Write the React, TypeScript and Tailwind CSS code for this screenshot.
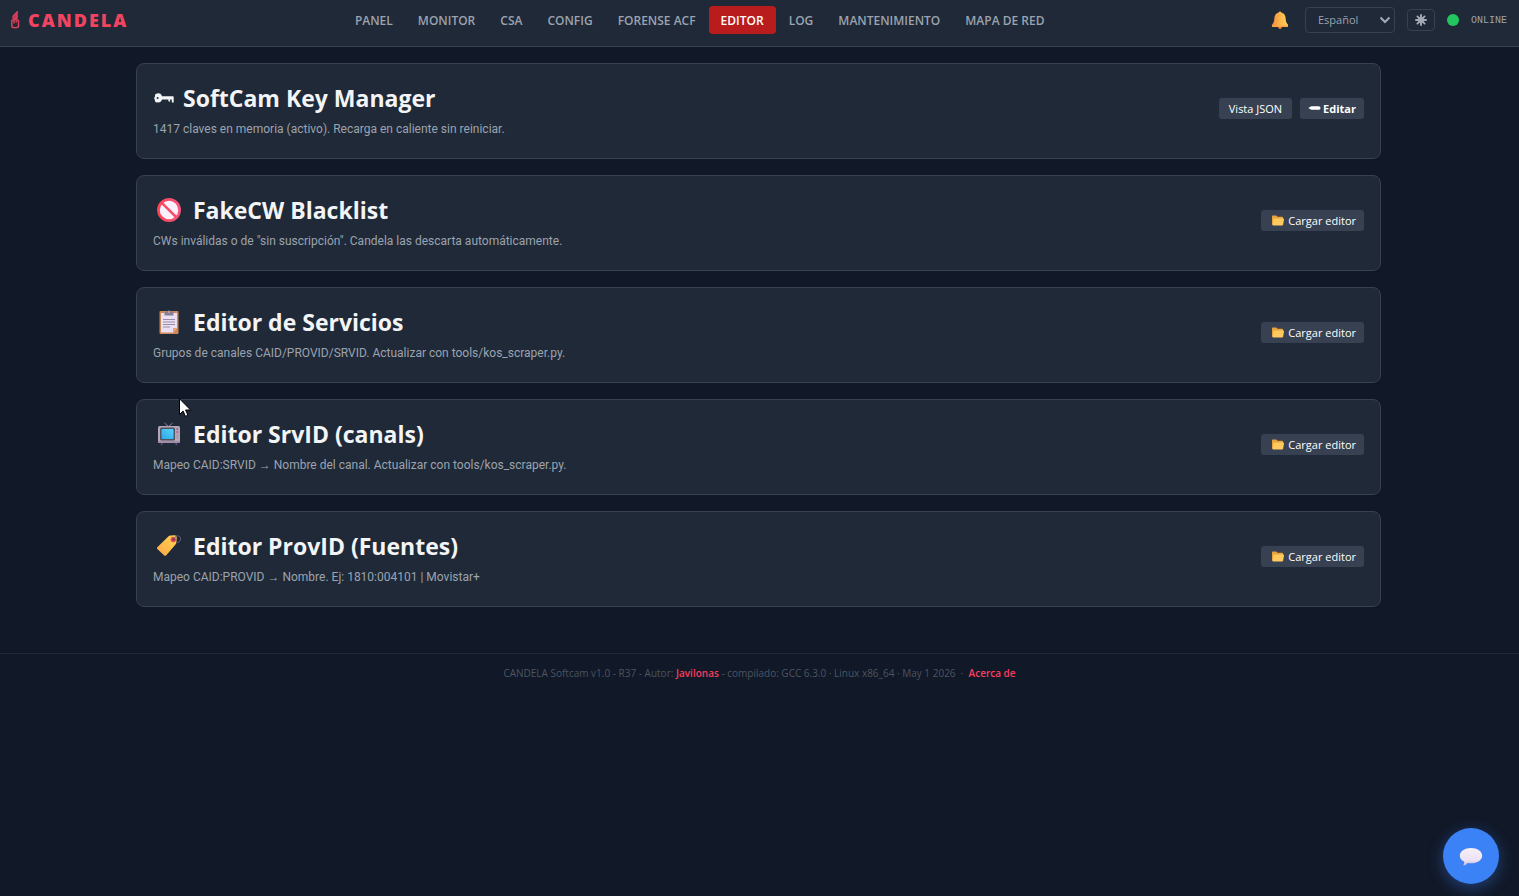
import type { ReactNode } from 'react';

const NAV = ['PANEL', 'MONITOR', 'CSA', 'CONFIG', 'FORENSE ACF', 'EDITOR', 'LOG', 'MANTENIMIENTO', 'MAPA DE RED'];

function CandleIcon() {
  return (
    <svg viewBox="0 0 10 18" className="w-[10px] h-[18px]" fill="none" stroke="#dc3f59" strokeWidth="1.5" strokeLinejoin="round">
      <path d="M7.3.8C6.600 2.600 3 3.600 3 6c0 1.300 1 2 2 2s2.200-.9 2.200-2.300C7.200 4.500 6.500 3.800 7.300.8z" fill="#c8364f" />
      <path d="M1.800 9.500C2.500 8.500 8 8.500 8.500 9.500v6c-.5 1.500-6.200 1.500-6.700 0z" />
      <path d="M4 9.500v3M6.300 9.500v2" />
    </svg>
  );
}

function BellIcon() {
  return (
    <svg viewBox="0 0 18 18" className="w-[18px] h-[18px]">
      <defs>
        <linearGradient id="bell" x1="0" x2="1" y1="0" y2="0">
          <stop offset="0" stopColor="#f28a3c" />
          <stop offset=".55" stopColor="#fdb94b" />
          <stop offset="1" stopColor="#ffd45a" />
        </linearGradient>
      </defs>
      <circle cx="9" cy="16.300" r="1.700" fill="#e5872f" />
      <circle cx="9" cy="1.800" r="1.300" fill="#f9b23c" />
      <path d="M9 1.500c-3.900 0-5.500 2.700-5.700 6.300C3.200 10.500 2.600 12 1.200 13.500c-.8 1 0 2.500 1.200 2.500h13.200c1.200 0 2-1.500 1.200-2.500-1.400-1.500-2-3-2.100-5.700C14.500 4.200 12.900 1.500 9 1.500z" fill="url(#bell)" />
      <path d="M.9 14.400h16.200c.2.900-.5 1.600-1.500 1.600H2.400c-1 0-1.700-.7-1.500-1.600z" fill="#fba548" />
    </svg>
  );
}

function ThemeIcon() {
  return (
    <svg viewBox="0 0 12 12" className="w-3 h-3" stroke="#a3aab6" strokeWidth="1.900" strokeLinecap="round">
      <path d="M6 1v10M1 6h10M2.400 2.400l7.200 7.200M9.600 2.400L2.400 9.600" />
      <circle cx="6" cy="6" r="3" fill="#a3aab6" stroke="none" />
    </svg>
  );
}

function KeyIcon() {
  return (
    <svg viewBox="0 0 22 12" className="w-[22px] h-3" fill="#f3f4f6">
      <path fillRule="evenodd" d="M4.500 1.500c1.700-.7 4 .3 4.500 2.700h10.500c.9 0 1.200.4 1.200 1.200v5.100h-1.900V7.400h-1.700v2.200h-1.700V7.400H9c-.6 2.500-2.600 3.300-4.300 2.900-1.700.7-3.200-.6-2.700-2.200-1-1-1-2.700 0-3.700C1.600 2.500 3 1.100 4.500 1.500zM4.600 5a1 1 0 1 0 0 2 1 1 0 0 0 0-2z" />
    </svg>
  );
}

function BanIcon() {
  return (
    <svg viewBox="0 0 24 24" className="w-6 h-6">
      <defs>
        <linearGradient id="ban" x1="0" x2="1">
          <stop offset="0" stopColor="#fa4355" />
          <stop offset="1" stopColor="#f8577d" />
        </linearGradient>
      </defs>
      <circle cx="12" cy="12" r="10.600" fill="#faf1fc" stroke="url(#ban)" strokeWidth="2.700" />
      <path d="M4.800 4.800l14.400 14.400" stroke="#f94a66" strokeWidth="2.600" />
    </svg>
  );
}

function ClipboardIcon() {
  return (
    <svg viewBox="0 0 24 24" className="w-6 h-6">
      <rect x="2.500" y="1" width="19" height="23" rx="1" fill="#cf8859" />
      <path d="M4 3h16v15l-4 4.500H4z" fill="#eae0f2" />
      <path d="M20 18l-4 4.500V18z" fill="#e9a06c" />
      <path d="M7.500 5.500V3c0-1 1.500-1.300 2.500-1.500C10.300 0 13.700 0 14 1.500c1 .2 2.500.5 2.500 1.500v2.500z" fill="#8a7e92" />
      <circle cx="12" cy="2" r=".8" fill="#d7cadf" />
      <path d="M6 9.500h12M6 12h12M6 14.500h12M6 17h7" stroke="#9b8da9" strokeWidth="1" />
    </svg>
  );
}

function TvIcon() {
  return (
    <svg viewBox="0 0 24 24" className="w-6 h-6">
      <defs>
        <linearGradient id="tv" x1="0" x2="1" y1="1" y2="0">
          <stop offset="0" stopColor="#2aa8e8" />
          <stop offset="1" stopColor="#5bd0fb" />
        </linearGradient>
      </defs>
      <path d="M7.500 1l4 3.500L15.500 1" stroke="#8d8497" strokeWidth="1" fill="none" />
      <path d="M5.500 20l-1.200 3.300M18.500 20l1.200 3.300" stroke="#654580" strokeWidth="1.600" />
      <rect x="1" y="4" width="22" height="17" rx="1.500" fill="#b4a5b8" />
      <rect x="1" y="19" width="22" height="2" rx="1" fill="#a18da6" />
      <rect x="3" y="5.500" width="15" height="13" rx="1.500" fill="#4f5462" />
      <rect x="4.500" y="7" width="12" height="10" rx="1" fill="url(#tv)" />
      <circle cx="20.300" cy="7" r="1" fill="#8a6f8c" />
      <circle cx="20.300" cy="10" r="1.100" fill="#e0507b" />
      <path d="M19.300 13h2M19.300 15h2" stroke="#a08da6" strokeWidth=".8" />
    </svg>
  );
}

function TagIcon() {
  return (
    <svg viewBox="0 0 24 24" className="w-6 h-6">
      <defs>
        <linearGradient id="tag" x1="0" x2="1" y1="1" y2="0">
          <stop offset="0" stopColor="#ffa64a" />
          <stop offset="1" stopColor="#ffd54d" />
        </linearGradient>
      </defs>
      <path d="M.3 13.200L11.600 2.300c.5-.5 1.100-.8 1.800-.9l4.200-.2c1.200 0 2.100.9 2.100 2.100l-.3 5.200c0 .7-.4 1.400-.9 1.900L9.300 21.300c-.7.700-1.600.7-2.300 0L.3 15c-.5-.5-.5-1.300 0-1.800z" fill="url(#tag)" />
      <circle cx="16.300" cy="5.500" r="2.700" fill="#ea4759" />
      <circle cx="16.500" cy="5.500" r="1.100" fill="#3a2c48" />
      <path d="M16.500 5.500c1.500-4.600 6.500-4.600 7-1.200.4 3.300-2.800 5.200-4.700 3.200" fill="none" stroke="#6d6080" strokeWidth="1" />
    </svg>
  );
}

function FolderIcon() {
  return (
    <svg viewBox="0 0 12 11" className="w-3 h-[11px]">
      <path d="M0 1.500C0 .7.400.4 1 .4h3.200l1.300 1.300h4.700c.6 0 .9.4.9 1v7.100H1C.3 9.800 0 9.300 0 8.700z" fill="#e8a33d" />
      <path d="M2.300 3.500h8.900c.6 0 .9.400.8 1l-.9 5c-.1.600-.5.900-1 .9H1.200c-.6 0-.9-.4-.8-1l1-5c.1-.6.400-.9.900-.9z" fill="#ffcb5c" />
    </svg>
  );
}

function PencilIcon() {
  return (
    <svg viewBox="0 0 13 6" className="w-[13px] h-[6px]">
      <path d="M.3 3l3-1.800h7.200c2.700 0 2.700 3.600 0 3.600H3.300z" fill="#fff" />
    </svg>
  );
}

function ChatIcon() {
  return (
    <svg viewBox="0 0 24 20" className="w-6 h-5">
      <defs>
        <linearGradient id="chat" x1="0" x2="0" y1="0" y2="1">
          <stop offset="0" stopColor="#f7eff9" />
          <stop offset=".7" stopColor="#ece2f3" />
          <stop offset="1" stopColor="#c9b6dc" />
        </linearGradient>
      </defs>
      <path d="M12 2c6.300 0 11.200 3.300 11.200 7.700s-4.900 7.600-11.200 7.600c-1.200 0-2.400-.1-3.500-.4-.8 1.200-2.200 2.300-3.500 2.500-.5.100-.7-.4-.4-.8.500-.8.700-2 .4-3C2.300 14.200.8 12.100.8 9.700.8 5.300 5.700 2 12 2z" fill="url(#chat)" />
    </svg>
  );
}

const SECTIONS = [
  { title: 'FakeCW Blacklist', icon: <BanIcon />, text: 'CWs inválidas o de "sin suscripción". Candela las descarta automáticamente.' },
  { title: 'Editor de Servicios', icon: <ClipboardIcon />, text: 'Grupos de canales CAID/PROVID/SRVID. Actualizar con tools/kos_scraper.py.' },
  { title: 'Editor SrvID (canals)', icon: <TvIcon />, text: 'Mapeo CAID:SRVID → Nombre del canal. Actualizar con tools/kos_scraper.py.' },
  { title: 'Editor ProvID (Fuentes)', icon: <TagIcon />, text: 'Mapeo CAID:PROVID → Nombre. Ej: 1810:004101 | Movistar+' },
];

function SectionCard({ title, icon, text, children }: { title: string; icon: ReactNode; text: string; children: ReactNode }) {
  return (
    <section className="flex items-center justify-between rounded-lg border border-[#374151] bg-[#1f2937] p-4">
      <div className="pb-1">
        <h2 className="flex items-center text-[23px] leading-9 font-bold text-[#f3f4f6]">
          {icon}
          {title}
        </h2>
        <p className="pt-1 font-[Roboto,'Noto_Sans',sans-serif] text-xs leading-[18px] text-[#9ca3af]">{text}</p>
      </div>
      <div className="flex gap-2 pb-1.5">{children}</div>
    </section>
  );
}

export default function App() {
  return (
    <div className="min-h-screen bg-[#111827] font-['Open_Sans','Noto_Sans',sans-serif] text-[#f3f4f6]">
      <header className="flex items-center justify-between border-b border-[#374151] bg-[#1f2937] pt-1.5 pr-3 pb-3 pl-2.5">
        <div className="flex items-center gap-2 text-lg leading-7 font-extrabold tracking-[2px] text-[#f04461]">
          <CandleIcon />
          <span>CANDELA</span>
        </div>

        <nav className="flex gap-px">
          {NAV.map((item) => (
            <a
              key={item}
              href="#"
              className={
                item === 'EDITOR'
                  ? 'rounded bg-[#b91c1c] px-3 pt-0.5 text-xs leading-[26px] font-semibold text-white'
                  : 'rounded px-3 pt-0.5 text-xs leading-[26px] font-semibold text-[#9ca3af]'
              }
            >
              {item}
            </a>
          ))}
        </nav>

        <div className="flex items-center gap-3">
          <button type="button" aria-label="Notificaciones" className="pr-1">
            <BellIcon />
          </button>
          <div className="relative">
            <select
              aria-label="Idioma"
              className="block h-[26px] w-[90px] appearance-none rounded border border-[#374151] bg-[#1f2937] pl-3 text-[11px] text-[#9ca3af]"
            >
              <option>Español</option>
            </select>
            <svg viewBox="0 0 12 8" className="pointer-events-none absolute top-[9px] right-1 h-2 w-3" fill="none" stroke="#a3aab6" strokeWidth="2">
              <path d="M1.500 1.500L6 6l4.500-4.500" />
            </svg>
          </div>
          <button type="button" aria-label="Tema" className="flex h-[22px] w-7 items-center justify-center rounded border border-[#374151]">
            <ThemeIcon />
          </button>
          <div className="flex items-center gap-3">
            <span className="h-3 w-3 rounded-full bg-[#22c55e]" />
            <span className="font-['Liberation_Mono',monospace] text-[10px] text-[#9ca3af]">ONLINE</span>
          </div>
        </div>
      </header>

      <main className="flex flex-col gap-4 pt-4 pr-[138px] pl-[136px]">
        <SectionCard
          title="SoftCam Key Manager"
          icon={<span className="mr-2"><KeyIcon /></span>}
          text="1417 claves en memoria (activo). Recarga en caliente sin reiniciar."
        >
          <button type="button" className="rounded-[3px] bg-[#374151] px-2.5 text-[11px] leading-[21px] text-white">
            Vista JSON
          </button>
          <button type="button" className="flex items-center gap-0.5 rounded-[3px] bg-[#374151] px-2 text-[11px] leading-[21px] font-bold text-white">
            <PencilIcon />
            Editar
          </button>
        </SectionCard>
        {SECTIONS.map((s) => (
          <SectionCard key={s.title} title={s.title} text={s.text} icon={<span className="mr-3 ml-1">{s.icon}</span>}>
            <button type="button" className="flex items-center gap-1 rounded-[3px] bg-[#374151] pr-2 pl-[11px] text-[11px] leading-[21px] text-white">
              <FolderIcon />
              Cargar editor
            </button>
          </SectionCard>
        ))}
      </main>

      <footer className="mt-[46px] border-t border-[#1f2937] pt-[11px] pb-3 text-center text-[10px] leading-4 text-[#4b5563]">
        CANDELA Softcam v1.0 - R37 - Autor:{' '}
        <a href="#" className="font-semibold text-[#f43f5e]">Javilonas</a> - compilado: GCC 6.3.0 · Linux x86_64 · May 1 2026 &nbsp;·&nbsp;{' '}
        <a href="#" className="font-semibold text-[#f43f5e]">Acerca de</a>
      </footer>

      <button
        type="button"
        aria-label="Chat"
        className="fixed right-5 bottom-3 flex h-14 w-14 items-center justify-center rounded-full bg-[#3b82f6] shadow-[0_4px_16px_rgba(59,130,246,0.4)]"
      >
        <ChatIcon />
      </button>

      {/* Mouse pointer */}
      <svg viewBox="0 0 12 19" className="pointer-events-none absolute top-[398px] left-[179px] h-[19px] w-3">
        <path d="M.5.800v15.700l3.600-3.500 2.300 5.300 2.500-1.100-2.300-5.200h5z" fill="#fff" stroke="#000" strokeWidth="1" />
      </svg>
    </div>
  );
}
